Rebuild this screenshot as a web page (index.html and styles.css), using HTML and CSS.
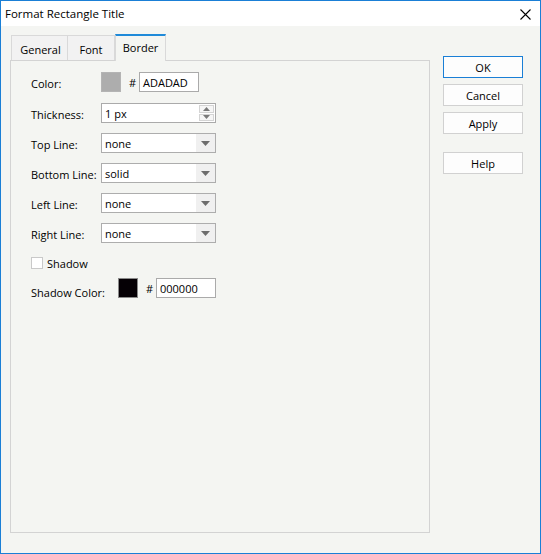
FILE: index.html
```html
<!DOCTYPE html>
<html>
<head>
<meta charset="utf-8">
<link rel="stylesheet" href="styles.css">
</head>
<body>
<div class="window">
  <div class="titlebar">
    <span class="title">Format Rectangle Title</span>
    <svg class="close" width="11" height="11" viewBox="0 0 11 11"><path d="M0.5 0.5 L10.5 10.5 M10.5 0.5 L0.5 10.5" stroke="#000" stroke-width="1.1" fill="none"/></svg>
  </div>
  <div class="body">
    <div class="left">
      <div class="tabs">
        <div class="tab tab-general">General</div>
        <div class="tab tab-font">Font</div>
        <div class="tab tab-active">Border</div>
      </div>
      <div class="panel">
        <div class="row row-color">
          <span class="label">Color:</span>
          <span class="swatch swatch-gray"></span>
          <span class="hash">#</span>
          <span class="input input-hex">ADADAD</span>
        </div>
        <div class="row">
          <span class="label">Thickness:</span>
          <span class="input input-wide spin">1 px
            <span class="spinner">
              <span class="spin-btn"><svg width="7" height="4" viewBox="0 0 7 4"><path d="M3.5 0 L7 4 L0 4 Z" fill="#7a7a7a"/></svg></span>
              <span class="spin-btn"><svg width="7" height="4" viewBox="0 0 7 4"><path d="M0 0 L7 0 L3.5 4 Z" fill="#7a7a7a"/></svg></span>
            </span>
          </span>
        </div>
        <div class="row">
          <span class="label">Top Line:</span>
          <span class="select">none<span class="arrow"><svg width="9" height="5" viewBox="0 0 9 5"><path d="M0 0 L9 0 L4.5 5 Z" fill="#6d6d6d"/></svg></span></span>
        </div>
        <div class="row">
          <span class="label">Bottom Line:</span>
          <span class="select">solid<span class="arrow"><svg width="9" height="5" viewBox="0 0 9 5"><path d="M0 0 L9 0 L4.5 5 Z" fill="#6d6d6d"/></svg></span></span>
        </div>
        <div class="row">
          <span class="label">Left Line:</span>
          <span class="select">none<span class="arrow"><svg width="9" height="5" viewBox="0 0 9 5"><path d="M0 0 L9 0 L4.5 5 Z" fill="#6d6d6d"/></svg></span></span>
        </div>
        <div class="row">
          <span class="label">Right Line:</span>
          <span class="select">none<span class="arrow"><svg width="9" height="5" viewBox="0 0 9 5"><path d="M0 0 L9 0 L4.5 5 Z" fill="#6d6d6d"/></svg></span></span>
        </div>
        <div class="check-row">
          <span class="checkbox"></span>
          <span class="check-label">Shadow</span>
        </div>
        <div class="row row-shadow">
          <span class="label label-shadow">Shadow Color:</span>
          <span class="swatch swatch-black"></span>
          <span class="hash hash-shadow">#</span>
          <span class="input input-hex2">000000</span>
        </div>
      </div>
    </div>
    <div class="buttons">
      <div class="btn btn-default">OK</div>
      <div class="btn">Cancel</div>
      <div class="btn">Apply</div>
      <div class="btn btn-help">Help</div>
    </div>
  </div>
</div>
</body>
</html>
```

FILE: styles.css
```css
html, body {
  margin: 0;
  padding: 0;
}
body {
  font-family: "Open Sans", "Liberation Sans", Arial, sans-serif;
  font-size: 11px;
  color: #000;
  background: #f4f5f2;
}
.window {
  box-sizing: border-box;
  width: 541px;
  height: 554px;
  border: 1px solid #1a7fd6;
  background: #f4f5f2;
  display: flex;
  flex-direction: column;
}
.titlebar {
  height: 25px;
  background: #fff;
  display: flex;
  align-items: center;
  padding: 0 9px 0 4px;
  flex-shrink: 0;
  font-size: 11.5px;
}
.title {
  flex: 1;
}
.close {
  display: block;
  margin-top: 1px;
}
.body {
  flex: 1;
  display: flex;
  padding: 8px 0 0 9px;
}
.left {
  width: 420px;
  display: flex;
  flex-direction: column;
}
.tabs {
  display: flex;
  height: 26px;
  padding-left: 1px;
  align-items: flex-end;
}
.tab {
  box-sizing: border-box;
  height: 25px;
  border: 1px solid #d9d9d9;
  border-bottom: none;
  background: #f2f2f2;
  display: flex;
  align-items: center;
  justify-content: center;
  padding-top: 2px;
}
.tab-general {
  width: 57px;
  padding-left: 2px;
}
.tab-font {
  width: 47px;
  border-left: none;
}
.tab-active {
  width: 51px;
  height: 27px;
  margin-bottom: -1px;
  border-top: 2px solid #1f8ad9;
  border-left: 1px solid #d9d9d9;
  background: #f4f5f2;
  position: relative;
  z-index: 1;
  padding-top: 0;
  padding-bottom: 3px;
}
.panel {
  box-sizing: border-box;
  height: 473px;
  border: 1px solid #d3d3d3;
  padding: 11px 0 0 20px;
}
.row {
  display: flex;
  align-items: center;
  height: 20px;
  margin-bottom: 10px;
}
.row-color {
  margin-bottom: 11px;
}
.label {
  width: 70px;
  padding-top: 2px;
}
.swatch {
  box-sizing: border-box;
  width: 20px;
  height: 20px;
}
.swatch-gray {
  background: #adadad;
  border: 1px solid #b4b4b4;
}
.swatch-black {
  background: #050005;
  border: 1px solid #8a8a8a;
}
.hash {
  margin-left: 8px;
  width: 10px;
}
.input {
  box-sizing: border-box;
  height: 20px;
  border: 1px solid #aaaaaa;
  background: #fff;
  display: flex;
  align-items: center;
  padding-left: 3px;
}
.input-hex {
  width: 60px;
}
.input-wide {
  width: 115px;
}
.spin {
  position: relative;
}
.spinner {
  position: absolute;
  right: 0;
  top: 0;
  bottom: 0;
  width: 16px;
  display: flex;
  flex-direction: column;
  gap: 1px;
  padding: 1px 1px 1px 0;
  box-sizing: border-box;
}
.spin-btn {
  flex: 1;
  box-sizing: border-box;
  border: 1px solid #d4d4d4;
  background: #f6f6f6;
  display: flex;
  align-items: center;
  justify-content: center;
}
.select {
  box-sizing: border-box;
  width: 115px;
  height: 20px;
  border: 1px solid #adadad;
  background: #fff;
  display: flex;
  align-items: center;
  padding-left: 3px;
  position: relative;
}
.arrow {
  position: absolute;
  right: 0;
  top: 0;
  bottom: 0;
  width: 19px;
  background: #f0f0f0;
  display: flex;
  align-items: center;
  justify-content: center;
}
.check-row {
  display: flex;
  align-items: center;
  height: 12px;
  margin-top: 14px;
  margin-bottom: 9px;
}
.checkbox {
  box-sizing: border-box;
  width: 12px;
  height: 12px;
  border: 1px solid #c9c9c9;
  background: #fff;
}
.check-label {
  margin-left: 4px;
}
.row-shadow {
  align-items: flex-start;
}
.label-shadow {
  width: 87px;
  padding-top: 7px;
}
.hash-shadow {
  margin-top: 3px;
}
.input-hex2 {
  width: 60px;
}
.buttons {
  display: flex;
  flex-direction: column;
  margin-left: 13px;
  padding-top: 22px;
}
.btn {
  box-sizing: border-box;
  width: 80px;
  height: 22px;
  border: 1px solid #d1d1d1;
  background: #fdfdfd;
  display: flex;
  align-items: center;
  justify-content: center;
  margin-bottom: 6px;
}
.btn-default {
  border-color: #1a7fd6;
}
.btn-help {
  margin-top: 12px;
}
```
